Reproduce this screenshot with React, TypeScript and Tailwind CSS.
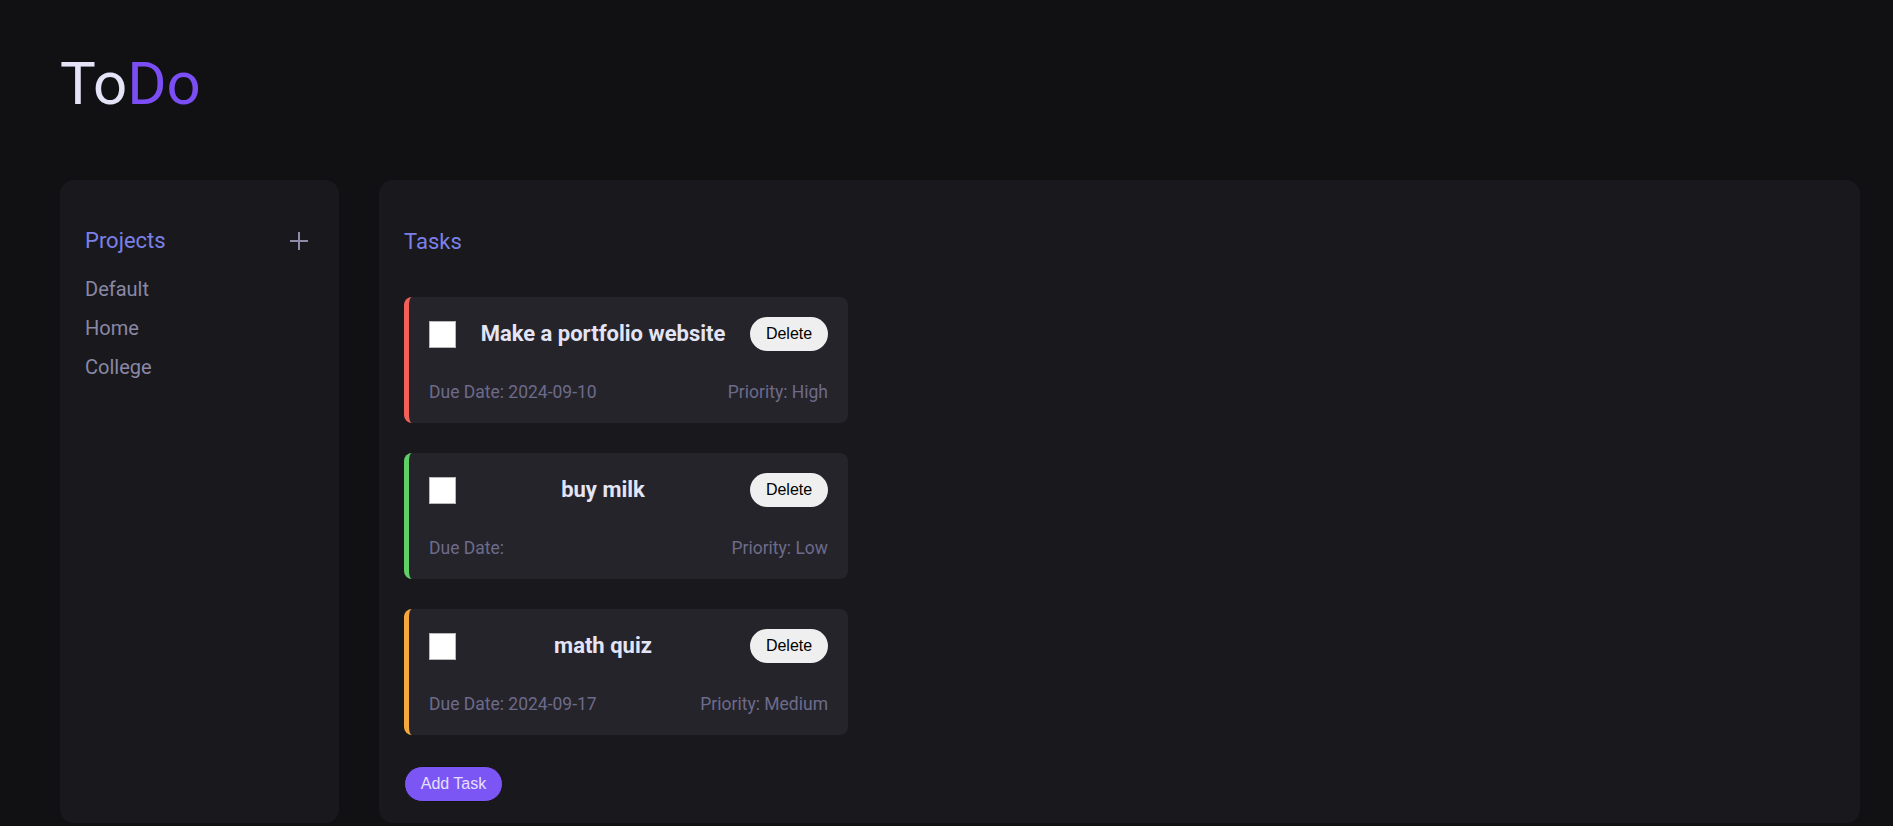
import React from "react";

type Task = {
  title: string;
  due: string;
  priority: string;
  border: string;
};

const projects = ["Default", "Home", "College"];

const tasks: Task[] = [
  { title: "Make a portfolio website", due: "2024-09-10", priority: "High", border: "border-l-[#f2605a]" },
  { title: "buy milk", due: "", priority: "Low", border: "border-l-[#5fd063]" },
  { title: "math quiz", due: "2024-09-17", priority: "Medium", border: "border-l-[#f6a83f]" },
];

function TaskCard({ task }: { task: Task }) {
  return (
    <div className={`w-[444px] rounded-lg border-l-[5px] ${task.border} bg-[#25242a] pl-[20px] pr-[20px] pt-[20px] pb-[20px]`}>
      <div className="flex items-center h-[34px]">
        <div className="w-[27px] h-[27px] bg-white border border-[#b8b8b8] shrink-0" />
        <span className="flex-1 text-center text-[22px] font-bold text-[#e4e4f7] leading-[34px]">{task.title}</span>
        <button className="w-[78px] h-[34px] rounded-full bg-[#efefef] text-black text-[16px] font-['Liberation_Sans',Arial,sans-serif] shrink-0">
          Delete
        </button>
      </div>
      <div className="mt-[31px] flex justify-between text-[17.5px] leading-[21px] text-[#6d6b8a]">
        <span>Due Date: {task.due}</span>
        <span>Priority: {task.priority}</span>
      </div>
    </div>
  );
}

export default function App() {
  return (
    <div className="min-h-screen bg-[#111113] pl-[60px] pr-[33px] pt-[49px] font-['Roboto',sans-serif]">
      <h1 className="text-[60px] leading-[70px] font-normal text-[#e4e3f8]">
        To<span className="text-[#7b4ef5]">Do</span>
      </h1>

      <div className="mt-[61px] flex gap-[40px] h-[643px]">
        {/* sidebar */}
        <aside className="w-[279px] shrink-0 rounded-[14px] bg-[#19181d] px-[25px] pt-[44px]">
          <div className="flex items-center justify-between">
            <h2 className="text-[22px] leading-[33px] text-[#7b80e6]">Projects</h2>
            <svg className="mr-[6px]" width="18" height="18" viewBox="0 0 18 18" fill="none">
              <path d="M9 0v18M0 9h18" stroke="#8e8ba9" strokeWidth="2" />
            </svg>
          </div>
          <ul className="mt-[13px]">
            {projects.map(p => (
              <li key={p} className="text-[20px] leading-[39px] text-[#8a88a5]">{p}</li>
            ))}
          </ul>
        </aside>

        {/* tasks */}
        <main className="flex-1 rounded-[14px] bg-[#19181d] px-[25px] pt-[45px]">
          <h2 className="text-[22px] leading-[33px] text-[#7b80e6]">Tasks</h2>
          <div className="mt-[39px] flex flex-col gap-[30px]">
            {tasks.map(t => (
              <TaskCard key={t.title} task={t} />
            ))}
          </div>
          <button className="mt-[31px] w-[99px] h-[36px] rounded-full bg-[#7c55f5] border border-[#141414] text-[16px] text-[#e6e0ff] font-['Liberation_Sans',Arial,sans-serif]">
            Add Task
          </button>
        </main>
      </div>
    </div>
  );
}
